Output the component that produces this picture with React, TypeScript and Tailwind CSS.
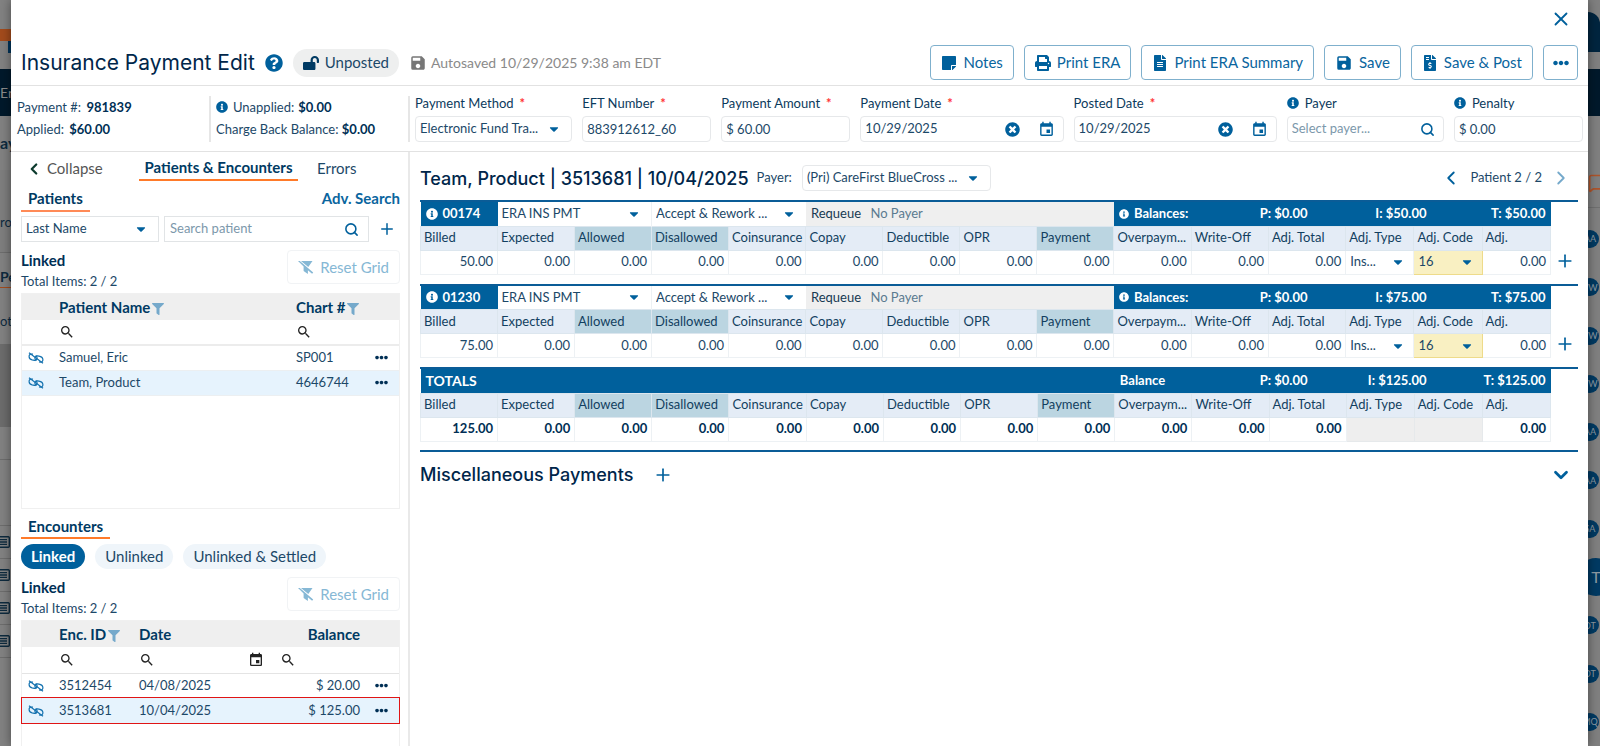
import { ReactNode } from 'react'
import {
  FaCaretDown,
  FaEllipsisH,
  FaFileAlt,
  FaFileInvoiceDollar,
  FaFilter,
  FaInfoCircle,
  FaLockOpen,
  FaPrint,
  FaQuestionCircle,
  FaStickyNote,
  FaTimesCircle,
} from 'react-icons/fa'
import { MdEvent, MdSave, MdSearch } from 'react-icons/md'
import { ChevronDown, ChevronLeft, ChevronRight, MessageSquare, Plus, Search, X } from 'lucide-react'

const COLUMNS = [
  'Billed',
  'Expected',
  'Allowed',
  'Disallowed',
  'Coinsurance',
  'Copay',
  'Deductible',
  'OPR',
  'Payment',
  'Overpaym...',
  'Write-Off',
  'Adj. Total',
  'Adj. Type',
  'Adj. Code',
  'Adj.',
]
const HIGHLIGHTED = ['Allowed', 'Disallowed', 'Payment']
const ZERO_COLUMNS = COLUMNS.slice(1, 12)

const PATIENTS = [
  { name: 'Samuel, Eric', chart: 'SP001', active: false },
  { name: 'Team, Product', chart: '4646744', active: true },
]

const ENCOUNTERS = [
  { id: '3512454', date: '04/08/2025', balance: '$ 20.00', active: false },
  { id: '3513681', date: '10/04/2025', balance: '$ 125.00', active: true },
]

const CHARGES = [
  { code: '00174', amount: '50.00' },
  { code: '01230', amount: '75.00' },
]

const AVATARS = ['AA', 'VW', 'VW', 'VW', 'AA', 'AA', 'SA', 'T', 'DT', 'DT', 'MQ']

const BOX = 'h-[26px] w-full rounded-[4px] border border-[#e6e8ea] px-1 text-[13px] text-[#1c4868]'
const CELL = 'border border-[#edf1f4] px-1 text-right'

function Dropdown({ id, label, value, className }: { id: string; label?: string; value: string; className: string }) {
  return (
    <div className={`flex items-center ${className}`}>
      <select id={id} aria-label={label} className="min-w-0 flex-1 appearance-none truncate bg-transparent outline-none">
        <option>{value}</option>
      </select>
      <FaCaretDown className="pointer-events-none size-3.5 shrink-0 text-[#00609c]" />
    </div>
  )
}

function Field({
  id,
  label,
  required,
  info,
  className,
  children,
}: {
  id: string
  label: string
  required?: boolean
  info?: boolean
  className: string
  children: ReactNode
}) {
  return (
    <div className={`flex min-w-0 flex-col ${className}`}>
      <label htmlFor={id} className="flex h-6 items-center text-[13px] whitespace-nowrap text-[#0b3a5c]">
        {info && <FaInfoCircle className="mr-1.5 mb-0.5 size-3 text-[#00609c]" />}
        {label}
        {required && <span className="ml-1.5 font-bold text-[#f33]">*</span>}
      </label>
      {children}
    </div>
  )
}

function DateBox({ id }: { id: string }) {
  return (
    <div className={`flex items-center ${BOX}`}>
      <input id={id} defaultValue="10/29/2025" className="min-w-0 flex-1 outline-none" />
      <button aria-label="Clear date" className="mr-[18px] text-[#00609c]">
        <FaTimesCircle className="size-[15px]" />
      </button>
      <button aria-label="Pick date" className="mr-1 text-[#00609c]">
        <MdEvent className="size-[17px]" />
      </button>
    </div>
  )
}

function ActionButton({ icon, children }: { icon: ReactNode; children: ReactNode }) {
  return (
    <button className="flex h-[35px] items-center gap-1.5 rounded-[4px] border border-[#7fb0cd] px-2.5 text-[15px] whitespace-nowrap text-[#0a659e]">
      {icon}
      {children}
    </button>
  )
}

function Header() {
  return (
    <header className="shrink-0 border-b border-[#e2e2e2] pr-2.5 pb-[5px] pl-2.5">
      <div className="flex h-[45px] items-start justify-end pt-2 pr-1.5">
        <button aria-label="Close" className="text-[#00609c]">
          <X className="size-[22px]" />
        </button>
      </div>
      <div className="flex items-center gap-2.5">
        <h1 className="font-['Inter',sans-serif] text-[21px] whitespace-nowrap text-[#00264a]">Insurance Payment Edit</h1>
        <button aria-label="Help" className="text-[#00609c]">
          <FaQuestionCircle className="size-[18px]" />
        </button>
        <span className="flex h-7 items-center gap-1.5 rounded-full bg-[#eeefef] px-2.5 text-[15px] text-[#1c4868]">
          <FaLockOpen className="size-4 text-[#003a63]" />
          Unposted
        </span>
        <span className="flex items-center gap-1 text-[14px] whitespace-nowrap text-[#8a8a8a]">
          <MdSave className="size-[18px] text-[#777]" />
          Autosaved 10/29/2025 9:38 am EDT
        </span>
        <div className="ml-auto flex gap-2.5">
          <ActionButton icon={<FaStickyNote className="size-4 text-[#00609c]" />}>Notes</ActionButton>
          <ActionButton icon={<FaPrint className="size-4 text-[#00609c]" />}>Print ERA</ActionButton>
          <ActionButton icon={<FaFileAlt className="size-4 text-[#00609c]" />}>Print ERA Summary</ActionButton>
          <ActionButton icon={<MdSave className="size-[18px] text-[#00609c]" />}>Save</ActionButton>
          <ActionButton icon={<FaFileInvoiceDollar className="size-4 text-[#00609c]" />}>Save &amp; Post</ActionButton>
          <button
            aria-label="More actions"
            className="flex size-[35px] items-center justify-center rounded-[4px] border border-[#7fb0cd] text-[#00609c]"
          >
            <FaEllipsisH className="size-4" />
          </button>
        </div>
      </div>
    </header>
  )
}

function PaymentFields() {
  return (
    <div className="flex shrink-0 border-b border-[#e2e2e2] pt-[6px] pr-[5px] pb-[9px] text-[13px] text-[#1c4868]">
      <div className="mt-1 w-[200px] shrink-0 border-r-2 border-[#e6e6e6] pl-1.5 leading-[22px]">
        <p>
          Payment #: <strong className="ml-0.5 text-[#002f55]">981839</strong>
        </p>
        <p>
          Applied: <strong className="ml-0.5 text-[#002f55]">$60.00</strong>
        </p>
      </div>
      <div className="mt-1 w-[199px] shrink-0 border-r-2 border-[#e6e6e6] pl-[5px] leading-[22px]">
        <p className="flex items-center">
          <FaInfoCircle className="mr-[5px] size-3 text-[#00609c]" />
          Unapplied: <strong className="ml-1 text-[#002f55]">$0.00</strong>
        </p>
        <p>
          Charge Back Balance: <strong className="text-[#002f55]">$0.00</strong>
        </p>
      </div>
      <div className="flex min-w-0 flex-1 gap-2.5 pl-[5px]">
        <Field id="method" label="Payment Method" required className="flex-[157]">
          <Dropdown id="method" value="Electronic Fund Tra..." className={`${BOX} pr-2.5`} />
        </Field>
        <Field id="eft" label="EFT Number" required className="flex-[129]">
          <input id="eft" defaultValue="883912612_60" className={BOX} />
        </Field>
        <Field id="amount" label="Payment Amount" required className="flex-[129]">
          <input id="amount" defaultValue="$ 60.00" className={BOX} />
        </Field>
        <Field id="payment-date" label="Payment Date" required className="flex-[203]">
          <DateBox id="payment-date" />
        </Field>
        <Field id="posted-date" label="Posted Date" required className="flex-[203]">
          <DateBox id="posted-date" />
        </Field>
        <Field id="payer" label="Payer" info className="flex-[157]">
          <div className={`flex items-center ${BOX}`}>
            <input id="payer" placeholder="Select payer..." className="min-w-0 flex-1 outline-none placeholder:text-[#7c98ab]" />
            <Search className="mr-1 size-[15px] text-[#00609c]" strokeWidth={2.5} />
          </div>
        </Field>
        <Field id="penalty" label="Penalty" info className="flex-[129]">
          <input id="penalty" defaultValue="$ 0.00" className={BOX} />
        </Field>
      </div>
    </div>
  )
}

function GridHeading() {
  return (
    <div className="mt-2 flex shrink-0 items-start justify-between">
      <div>
        <h3 className="text-[15px] leading-5 font-bold text-[#002f55]">Linked</h3>
        <p className="text-[13px] leading-[22px] text-[#1c4868]">Total Items: 2 / 2</p>
      </div>
      <button className="flex h-[34px] items-center gap-1.5 rounded-[4px] border border-[#f1f3f5] px-2.5 text-[15px] text-[#86b8d5]">
        <svg viewBox="0 0 16 13" className="h-[13px] w-4" aria-hidden="true">
          <path fill="currentColor" d="M3 0h11.5L10.3 6.1zM0 0h1.8l13.4 11.6-1.1 1.2-4.2-3.6V13L5.6 10V5.6z" />
        </svg>
        Reset Grid
      </button>
    </div>
  )
}

function UnlinkCell() {
  return (
    <td>
      <button aria-label="Unlink" className="flex w-full justify-center pr-0.5 text-[#1673b0]">
        <svg viewBox="0 0 16 12" className="h-3 w-4" fill="none" stroke="currentColor" strokeWidth="1.2" aria-hidden="true">
          <path d="M5 2.2 3.6 2C1.9 2 1 3.2 1.1 4.6c.1 1.6 1.2 2.9 3 3.3l2.2.4c1.6.2 2.8-.8 2.8-2.3 0-1-.6-1.9-1.4-2.5" />
          <path d="m11 9.9 1.4.2c1.7 0 2.6-1.1 2.5-2.6-.1-1.6-1.2-2.8-3-3.2l-2.2-.4C8.100 3.700 6.900 4.700 6.900 6.200c0 1 .6 1.900 1.400 2.500" />
          <path d="M1 .8 15 11.2" />
        </svg>
      </button>
    </td>
  )
}

function MoreCell() {
  return (
    <td>
      <button aria-label="More actions" className="flex w-full justify-center pr-1 text-[#002f55]">
        <FaEllipsisH className="size-[13px]" />
      </button>
    </td>
  )
}

function FilterInput({ label }: { label: string }) {
  return (
    <div className="flex min-w-0 flex-1 items-center">
      <MdSearch className="size-4 shrink-0 text-[#222]" />
      <input aria-label={label} className="w-0 min-w-0 flex-1 outline-none" />
    </div>
  )
}

function Sidebar() {
  return (
    <aside className="flex w-[399px] shrink-0 flex-col border-r-2 border-[#e9e9e9] pr-2 pl-2.5">
      <nav className="flex h-[29px] shrink-0 items-stretch text-[15px] text-[#1c4868]">
        <button className="flex w-[118px] items-center gap-1 pt-1 pl-1 text-[#555]">
          <ChevronLeft className="size-[18px] text-[#0d3b2e]" strokeWidth={3} />
          Collapse
        </button>
        <button className="w-[159px] border-b-2 border-[#ff7a29] pt-1 font-bold whitespace-nowrap text-[#003a63]">
          Patients &amp; Encounters
        </button>
        <button className="ml-[19px] pt-1">Errors</button>
      </nav>

      <div className="flex h-[31px] shrink-0 items-end justify-between">
        <h2 className="border-b-2 border-[#ff8a57] px-[7px] pb-0.5 text-[15px] leading-5 font-bold text-[#003a63]">Patients</h2>
        <a href="#search" className="pb-0.5 text-[15px] leading-6 font-bold text-[#0a659e]">
          Adv. Search
        </a>
      </div>

      <div className="mt-1 flex h-[26px] shrink-0 items-center text-[13px] text-[#1c4868]">
        <Dropdown
          id="patient-field"
          label="Search field"
          value="Last Name"
          className="h-full w-[138px] border border-[#e1e4e6] pr-2.5 pl-1"
        />
        <div className="ml-[5px] flex h-full flex-1 items-center border border-[#e1e4e6] px-[5px]">
          <input
            aria-label="Search patient"
            placeholder="Search patient"
            className="min-w-0 flex-1 outline-none placeholder:text-[#7c98ab]"
          />
          <Search className="mr-1 size-[15px] text-[#00609c]" strokeWidth={2.5} />
        </div>
        <button aria-label="Add patient" className="flex w-[31px] justify-center pl-1 text-[#00609c]">
          <Plus className="size-[18px]" />
        </button>
      </div>

      <GridHeading />

      <div className="mt-px h-[216px] shrink-0 border border-[#f0f0f0]">
        <table className="w-full table-fixed text-[13px] text-[#1c4868]">
          <colgroup>
            <col className="w-[29px]" />
            <col />
            <col className="w-[80px]" />
            <col className="w-[31px]" />
          </colgroup>
          <thead>
            <tr className="h-[26px] bg-[#efefef] text-left text-[15px] text-[#003a63]">
              <th />
              <th className="pl-2">
                Patient Name <FaFilter className="-ml-0.5 inline size-3 text-[#75a9cb]" />
              </th>
              <th className="pl-2 whitespace-nowrap">
                Chart # <FaFilter className="-ml-0.5 inline size-3 text-[#75a9cb]" />
              </th>
              <th />
            </tr>
            <tr className="h-[25px] border-b-2 border-[#ececec]">
              <td />
              <td className="pl-2">
                <FilterInput label="Filter patient name" />
              </td>
              <td className="pl-2">
                <FilterInput label="Filter chart number" />
              </td>
              <td />
            </tr>
          </thead>
          <tbody>
            {PATIENTS.map((patient) => (
              <tr key={patient.chart} className={`h-[25px] border-b border-[#eceff1] ${patient.active ? 'bg-[#e6f3fd]' : ''}`}>
                <UnlinkCell />
                <td className="pl-2">{patient.name}</td>
                <td className="pl-2">{patient.chart}</td>
                <MoreCell />
              </tr>
            ))}
          </tbody>
        </table>
      </div>

      <div className="mt-[7px] flex shrink-0">
        <h2 className="border-b-2 border-[#ff7a29] px-[7px] text-[15px] leading-[21px] font-bold text-[#003a63]">Encounters</h2>
      </div>

      <div className="mt-[5px] flex h-[25px] shrink-0 gap-2.5 text-[15px] text-[#1c4868]">
        <button className="rounded-full bg-[#00609c] px-2.5 font-bold text-white">Linked</button>
        <button className="rounded-full bg-[#eff5fa] px-2.5">Unlinked</button>
        <button className="rounded-full bg-[#eff5fa] px-2.5">Unlinked &amp; Settled</button>
      </div>

      <GridHeading />

      <div className="mt-px min-h-[124px] flex-1 border border-b-0 border-[#f0f0f0]">
        <table className="w-full table-fixed text-[13px] text-[#1c4868]">
          <colgroup>
            <col className="w-[29px]" />
            <col className="w-[80px]" />
            <col />
            <col className="w-[96px]" />
            <col className="w-[31px]" />
          </colgroup>
          <thead>
            <tr className="h-[26px] bg-[#efefef] text-left text-[15px] text-[#003a63]">
              <th />
              <th className="pl-2 whitespace-nowrap">
                Enc. ID <FaFilter className="-ml-0.5 inline size-3 text-[#75a9cb]" />
              </th>
              <th className="pl-2">Date</th>
              <th className="pr-2 text-right">Balance</th>
              <th />
            </tr>
            <tr className="h-[26px] border-b border-[#e4e4e4]">
              <td />
              <td className="pl-2">
                <FilterInput label="Filter encounter" />
              </td>
              <td className="pr-2 pl-2">
                <div className="flex items-center">
                  <FilterInput label="Filter date" />
                  <button aria-label="Pick date" className="text-[#222]">
                    <MdEvent className="size-4" />
                  </button>
                </div>
              </td>
              <td className="pl-2">
                <FilterInput label="Filter balance" />
              </td>
              <td />
            </tr>
          </thead>
          <tbody>
            {ENCOUNTERS.map((encounter) => (
              <tr
                key={encounter.id}
                className={`h-[25px] ${encounter.active ? 'bg-[#e6f3fd] outline outline-[#e01515]' : ''}`}
              >
                <UnlinkCell />
                <td className="pl-2">{encounter.id}</td>
                <td className="pl-2">{encounter.date}</td>
                <td className="pr-2 text-right">{encounter.balance}</td>
                <MoreCell />
              </tr>
            ))}
          </tbody>
        </table>
      </div>
    </aside>
  )
}

function Balances({ label, info, amount }: { label: string; info?: boolean; amount: string }) {
  return (
    <td colSpan={6} className="bg-[#00609c] font-bold text-white">
      <div className="flex items-center px-[5px]">
        <span className="flex flex-1 items-center gap-[5px]">
          {info && <FaInfoCircle className="size-2.5" />}
          {label}
        </span>
        <span className="w-[119px] text-right">P: $0.00</span>
        <span className="w-[119px] text-right">I: ${amount}</span>
        <span className="w-[119px] text-right">T: ${amount}</span>
      </div>
    </td>
  )
}

function ChargeTable({ head, action, children }: { head: ReactNode; action?: ReactNode; children: ReactNode }) {
  return (
    <div className="flex items-start border-t-2 border-[#0a5c97]">
      <table className="min-w-0 flex-1 table-fixed text-[13px] text-[#1c4868]">
        <colgroup>
          {COLUMNS.map((column, i) => (
            <col key={column} className={i < 12 ? 'w-[77px]' : 'w-[68px]'} />
          ))}
        </colgroup>
        <thead>
          <tr className="h-6">{head}</tr>
          <tr className="h-6 text-left text-[#123f60]">
            {COLUMNS.map((column) => (
              <th
                key={column}
                className={`border border-[#dce6ee] px-[3px] font-normal whitespace-nowrap ${
                  HIGHLIGHTED.includes(column) ? 'bg-[#bbd5e1]' : 'bg-[#e4ecf6]'
                }`}
              >
                {column}
              </th>
            ))}
          </tr>
        </thead>
        <tbody>
          <tr className="h-6">{children}</tr>
        </tbody>
      </table>
      <div className="flex w-[27px] justify-center self-end pb-1">{action}</div>
    </div>
  )
}

function ChargeRow({ code, amount }: { code: string; amount: string }) {
  return (
    <ChargeTable
      head={
        <>
          <td className="bg-[#00609c] pl-[5px] font-bold text-white">
            <span className="flex items-center gap-[5px]">
              <FaInfoCircle className="size-3" />
              {code}
            </span>
          </td>
          <td colSpan={2} className="border-r border-[#edf1f4] pr-2.5">
            <Dropdown id={`type-${code}`} label="Payment type" value="ERA INS PMT" className="pl-1" />
          </td>
          <td colSpan={2} className="pr-2.5">
            <Dropdown id={`action-${code}`} label="Action" value="Accept & Rework ..." className="pl-1" />
          </td>
          <td colSpan={4} className="bg-[#efefef] pl-[5px] text-[#173a52]">
            Requeue <span className="ml-1.5 text-[#5b7b90]">No Payer</span>
          </td>
          <Balances label="Balances:" info amount={amount} />
        </>
      }
      action={
        <button aria-label="Add adjustment" className="text-[#00609c]">
          <Plus className="size-5" />
        </button>
      }
    >
      <td className={CELL}>{amount}</td>
      {ZERO_COLUMNS.map((column) => (
        <td key={column} className={CELL}>
          0.00
        </td>
      ))}
      <td className="border border-[#edf1f4] pr-2 pl-1">
        <Dropdown id={`adj-type-${code}`} label="Adj. Type" value="Ins..." className="w-full" />
      </td>
      <td className="border border-[#eedb8a] bg-[#f9f0c2] pr-2 pl-1">
        <Dropdown id={`adj-code-${code}`} label="Adj. Code" value="16" className="w-full" />
      </td>
      <td className={CELL}>0.00</td>
    </ChargeTable>
  )
}

function EncounterPanel() {
  return (
    <main className="min-w-0 flex-1 px-2.5">
      <div className="flex h-12 items-center pt-1 text-[13px] text-[#1c4868]">
        <h2 className="font-['Inter',sans-serif] text-[18px] font-medium whitespace-nowrap text-[#00264a]">
          Team, Product | 3513681 | 10/04/2025
        </h2>
        <label htmlFor="encounter-payer" className="ml-2">
          Payer:
        </label>
        <div className="ml-2.5 w-[189px]">
          <Dropdown id="encounter-payer" value="(Pri) CareFirst BlueCross ..." className={`${BOX} pr-2.5`} />
        </div>
        <div className="ml-auto flex items-center gap-2 pr-1.5">
          <button aria-label="Previous patient" className="text-[#00609c]">
            <ChevronLeft className="size-[22px]" />
          </button>
          Patient 2 / 2
          <button aria-label="Next patient" className="text-[#75a9cb]">
            <ChevronRight className="size-[22px]" />
          </button>
        </div>
      </div>

      <div className="mb-2 flex flex-col gap-[9px]">
        {CHARGES.map((charge) => (
          <ChargeRow key={charge.code} code={charge.code} amount={charge.amount} />
        ))}

        <ChargeTable
          head={
            <>
              <td colSpan={9} className="bg-[#00609c] pl-[5px] text-[14px] font-bold text-white">
                TOTALS
              </td>
              <Balances label="Balance" amount="125.00" />
            </>
          }
        >
          <td className={`${CELL} font-bold text-[#002f55]`}>125.00</td>
          {ZERO_COLUMNS.map((column) => (
            <td key={column} className={`${CELL} font-bold text-[#002f55]`}>
              0.00
            </td>
          ))}
          <td className="border border-[#e6e9eb] bg-[#eeeeee]" />
          <td className="border border-[#e6e9eb] bg-[#eeeeee]" />
          <td className={`${CELL} font-bold text-[#002f55]`}>0.00</td>
        </ChargeTable>
      </div>

      <section className="flex h-12 items-center border-t-2 border-[#0a5c97] pr-1.5">
        <h2 className="font-['Inter',sans-serif] text-[18px] font-medium text-[#00264a]">Miscellaneous Payments</h2>
        <button aria-label="Add miscellaneous payment" className="ml-5 text-[#00609c]">
          <Plus className="size-5" />
        </button>
        <button aria-label="Expand miscellaneous payments" className="ml-auto text-[#00609c]">
          <ChevronDown className="size-[22px]" strokeWidth={3} />
        </button>
      </section>
    </main>
  )
}

// Slivers of the dimmed page that stay visible on both sides of the dialog
function LeftBackdrop() {
  return (
    <div className="flex w-[11px] shrink-0 flex-col overflow-hidden bg-[#828282] text-[16px] whitespace-nowrap text-[#0d2a3e]">
      <div className="flex h-[69px] shrink-0 flex-col pt-[29px]">
        <div className="h-3 bg-[#a34b1c]" />
        <div className="ml-2 h-3 bg-[#00345a]" />
      </div>
      <div className="flex h-[47px] shrink-0 items-center bg-[#00192b] text-[14px] text-[#8b8b8b]">En</div>
      <div className="flex h-[54px] shrink-0 items-center font-bold">ay</div>
      <div className="flex h-[83px] shrink-0 items-center border-b border-[#6d6d6d] bg-[#7e7e7e] pt-6 text-[13px]">ro</div>
      <div className="flex h-[35px] shrink-0 items-end border-b border-[#a34b1c] text-[14px] font-bold">Pe</div>
      <div className="flex h-14 shrink-0 items-center pt-3 text-[13px]">oto</div>
      <div className="h-[83px] shrink-0 bg-[#6c6c6c]" />
      <div className="h-[33px] shrink-0 border-b border-[#6d6d6d]" />
      <div className="h-[66px] shrink-0 border-b border-[#6d6d6d]" />
      {[1, 2, 3, 4].map((row) => (
        <div key={row} className="flex h-[33px] shrink-0 items-center justify-end border-b border-[#6d6d6d] pr-px">
          <svg viewBox="0 0 18 12" className="h-3 w-[18px] shrink-0" fill="none" stroke="#0d2a3e" strokeWidth="1.4">
            <rect x=".7" y=".7" width="16.6" height="10.6" rx="1" />
            <path d="M7 3.6h8M7 6h8M7 8.4h8M3 3.6h2M3 6h2M3 8.4h2" />
          </svg>
        </div>
      ))}
    </div>
  )
}

function RightBackdrop() {
  return (
    <div className="flex w-3 shrink-0 flex-col overflow-hidden bg-[#808080]">
      <div className="flex h-[69px] shrink-0 items-start pt-3">
        <div className="h-10 w-3 rounded-tr-full bg-[#00253f]" />
      </div>
      <div className="h-[47px] shrink-0 bg-[#00192b]" />
      <div className="flex h-[92px] shrink-0 items-end border-b border-[#707070] pb-3.5">
        <MessageSquare className="size-5 shrink-0 text-[#b0542a]" />
      </div>
      <div className="mt-[7px] flex min-h-0 flex-1 flex-col">
        {AVATARS.map((initials, i) => (
          <div key={i} className="flex flex-1 items-center justify-end pr-px">
            <span
              className={
                initials === 'T'
                  ? '-mr-4 flex size-[38px] shrink-0 items-center justify-center rounded-full bg-[#003a63] text-[16px] text-[#8f9ba3]'
                  : 'flex size-[18px] shrink-0 items-center justify-center rounded-full bg-[#003a63] text-[9px] text-[#8f9ba3]'
              }
            >
              {initials}
            </span>
          </div>
        ))}
      </div>
    </div>
  )
}

export default function App() {
  return (
    <div className="flex h-screen overflow-hidden bg-[#808080] font-['Lato','Open_Sans',sans-serif]">
      <LeftBackdrop />
      <div
        role="dialog"
        aria-label="Insurance Payment Edit"
        className="relative flex min-w-0 flex-1 flex-col bg-white shadow-[0_0_10px_rgba(0,0,0,0.45)]"
      >
        <Header />
        <PaymentFields />
        <div className="flex min-h-0 flex-1">
          <Sidebar />
          <EncounterPanel />
        </div>
      </div>
      <RightBackdrop />
    </div>
  )
}
